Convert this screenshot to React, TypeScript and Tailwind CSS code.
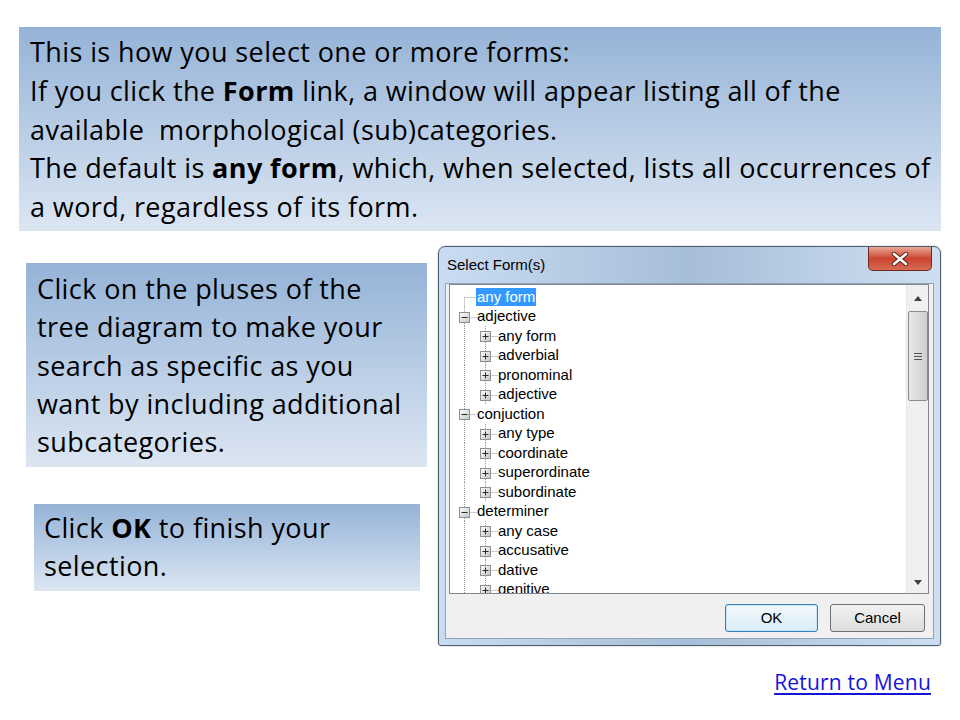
import React from "react";

type Row = { label: string; level: 0 | 1; kind: "none" | "minus" | "plus"; selected?: boolean; first?: boolean };

const rows: Row[] = [
  { label: "any form", level: 0, kind: "none", selected: true, first: true },
  { label: "adjective", level: 0, kind: "minus" },
  { label: "any form", level: 1, kind: "plus" },
  { label: "adverbial", level: 1, kind: "plus" },
  { label: "pronominal", level: 1, kind: "plus" },
  { label: "adjective", level: 1, kind: "plus" },
  { label: "conjuction", level: 0, kind: "minus" },
  { label: "any type", level: 1, kind: "plus" },
  { label: "coordinate", level: 1, kind: "plus" },
  { label: "superordinate", level: 1, kind: "plus" },
  { label: "subordinate", level: 1, kind: "plus" },
  { label: "determiner", level: 0, kind: "minus" },
  { label: "any case", level: 1, kind: "plus" },
  { label: "accusative", level: 1, kind: "plus" },
  { label: "dative", level: 1, kind: "plus" },
  { label: "genitive", level: 1, kind: "plus" },
];

function Expander({ cx, cy, minus }: { cx: number; cy: number; minus: boolean }) {
  return (
    <g>
      <defs>
        <linearGradient id="expg" x1="0" y1="0" x2="1" y2="1">
          <stop offset="0" stopColor="#ffffff" />
          <stop offset="1" stopColor="#c4c4c4" />
        </linearGradient>
      </defs>
      <rect x={cx - 5} y={cy - 5} width={10} height={10} fill="url(#expg)" stroke="#8e8f8f" strokeWidth={1} />
      <line x1={cx - 3} y1={cy} x2={cx + 3} y2={cy} stroke="#2b2b2b" strokeWidth={1} />
      {!minus && <line x1={cx} y1={cy - 3} x2={cx} y2={cy + 3} stroke="#2b2b2b" strokeWidth={1} />}
    </g>
  );
}

function TreeGutter({ row }: { row: Row }) {
  const w = row.level === 0 ? 27 : 48;
  const h = 19.5;
  const cy = 10.5;
  const rootX = 14.5;
  const childX = 35.5;
  const dot = { stroke: "#9a9a9a", strokeWidth: 1, strokeDasharray: "1 1" };
  return (
    <svg width={w} height={h} className="shrink-0 block">
      {row.first ? (
        <line x1={rootX} y1={cy} x2={rootX} y2={h} {...dot} />
      ) : (
        <line x1={rootX} y1={0} x2={rootX} y2={h} {...dot} />
      )}
      {row.level === 0 && (
        <>
          <line x1={rootX} y1={cy} x2={w} y2={cy} {...dot} />
          {row.kind !== "none" && <Expander cx={rootX} cy={cy} minus={row.kind === "minus"} />}
        </>
      )}
      {row.level === 1 && (
        <>
          <line x1={childX} y1={0} x2={childX} y2={h} {...dot} />
          <line x1={childX} y1={cy} x2={w} y2={cy} {...dot} />
          <Expander cx={childX} cy={cy} minus={false} />
        </>
      )}
    </svg>
  );
}

function Dialog() {
  return (
    <div className="w-[503px] h-[400px] flex flex-col rounded-t-[7px] rounded-b-[3px] border border-[#4d5d70] bg-gradient-to-r from-[#c9dcf1] via-[#a7bed8] to-[#cfdff1] shadow-[0_0_2px_rgba(0,0,0,0.3)]">
      <div className="h-[36px] flex items-start shrink-0">
        <div className="pl-[8px] pt-[8px] text-[15px] leading-[20px] text-black" style={{ fontFamily: '"Liberation Sans", Arial, sans-serif' }}>
          Select Form(s)
        </div>
        <div className="ml-auto mr-[8px] w-[64px] h-[24px] rounded-b-[5px] border border-t-0 border-[#6e2a22] bg-gradient-to-b from-[#e8a596] via-[#c9432f] to-[#d86a52] flex items-center justify-center">
          <svg width="20" height="14" viewBox="0 0 20 14">
            <path d="M4 2 L16 12 M16 2 L4 12" stroke="#5a1f18" strokeWidth="4.5" strokeLinecap="round" />
            <path d="M4 2 L16 12 M16 2 L4 12" stroke="#ffffff" strokeWidth="2.6" strokeLinecap="round" />
          </svg>
        </div>
      </div>
      <div className="mx-[6px] mb-[6px] flex-1 bg-[#f0f0f0] border border-[#8ea2b8] flex flex-col" style={{ fontFamily: '"Liberation Sans", Arial, sans-serif' }}>
        <div className="ml-[3px] mr-[4px] h-[310px] border border-[#828790] bg-white flex shrink-0">
          <div className="flex-1 overflow-hidden pt-[2px]">
            {rows.map((r, i) => (
              <div key={i} className="h-[19.5px] flex items-center">
                <TreeGutter row={r} />
                <span
                  className={
                    r.selected
                      ? "bg-[#3399ff] text-white text-[15px] leading-[18px] px-[1px] -ml-[1px]"
                      : "text-black text-[15px] leading-[18px]"
                  }
                >
                  {r.label}
                </span>
              </div>
            ))}
          </div>
          <div className="w-[22px] bg-[#f0f0f0] border-l border-[#e6e6e6] flex flex-col items-center">
            <div className="h-[26px] flex items-center justify-center">
              <svg width="8" height="5" viewBox="0 0 8 5">
                <path d="M0 5 L4 0 L8 5 Z" fill="#404040" />
              </svg>
            </div>
            <div className="w-[20px] h-[90px] rounded-[2px] border border-[#8b8b8b] bg-gradient-to-r from-[#e8e8e8] via-[#dcdcdc] to-[#cfcfcf] flex items-center justify-center">
              <svg width="8" height="9" viewBox="0 0 8 9">
                <path d="M0 1.5 H8 M0 4.5 H8 M0 7.5 H8" stroke="#555" strokeWidth="1" />
              </svg>
            </div>
            <div className="flex-1" />
            <div className="h-[22px] flex items-center justify-center">
              <svg width="8" height="5" viewBox="0 0 8 5">
                <path d="M0 0 L4 5 L8 0 Z" fill="#404040" />
              </svg>
            </div>
          </div>
        </div>
        <div className="flex justify-end gap-[12px] pr-[8px] pt-[10px]">
          <div className="w-[93px] h-[28px] rounded-[3px] border border-[#3c7fb1] bg-gradient-to-b from-[#f3f9fc] to-[#d9ecf7] shadow-[inset_0_0_0_1px_#c2e4f6] flex items-center justify-center text-[15px] text-black">
            OK
          </div>
          <div className="w-[95px] h-[28px] rounded-[3px] border border-[#707070] bg-gradient-to-b from-[#f2f2f2] to-[#dcdcdc] flex items-center justify-center text-[15px] text-black">
            Cancel
          </div>
        </div>
      </div>
    </div>
  );
}

export default function App() {
  const slideFont = { fontFamily: '"Open Sans", Lato, sans-serif' };
  return (
    <div className="w-[960px] h-[720px] bg-white flex flex-col pt-[27px] pl-[19px] text-black" style={slideFont}>
      <div className="w-[922px] h-[204px] bg-gradient-to-b from-[#95b3d7] to-[#dce6f2] pl-[11px] pt-[6px] text-[27px] tracking-[0.4px] leading-[38.75px] whitespace-nowrap">
        <div>This is how you select one or more forms:</div>
        <div>
          If you click the <b>Form</b> link, a window will appear listing all of the
        </div>
        <div>available&nbsp; morphological (sub)categories.</div>
        <div>
          The default is <b>any form</b>, which, when selected, lists all occurrences of
        </div>
        <div>a word, regardless of its form.</div>
      </div>
      <div className="flex mt-[15px] w-[922px]">
        <div className="flex flex-col">
          <div className="ml-[7px] mt-[17px] w-[401px] h-[204px] bg-gradient-to-b from-[#95b3d7] to-[#dce6f2] pl-[11px] pt-[7px] text-[27px] tracking-[0.4px] leading-[38.25px] whitespace-nowrap">
            <div>Click on the pluses of the</div>
            <div>tree diagram to make your</div>
            <div>search as specific as you</div>
            <div>want by including additional</div>
            <div>subcategories.</div>
          </div>
          <div className="ml-[15px] mt-[37px] w-[386px] h-[87px] bg-gradient-to-b from-[#95b3d7] to-[#dce6f2] pl-[10px] pt-[5px] text-[27px] tracking-[0.4px] leading-[38px] whitespace-nowrap">
            <div>
              Click <b>OK</b> to finish your
            </div>
            <div>selection.</div>
          </div>
        </div>
        <div className="ml-auto">
          <Dialog />
        </div>
      </div>
      <div className="w-[912px] flex justify-end mt-[24px]">
        <a className="text-[21px] tracking-[0.2px] leading-[24px] text-[#1414dc] underline underline-offset-[3px]">Return to Menu</a>
      </div>
    </div>
  );
}
